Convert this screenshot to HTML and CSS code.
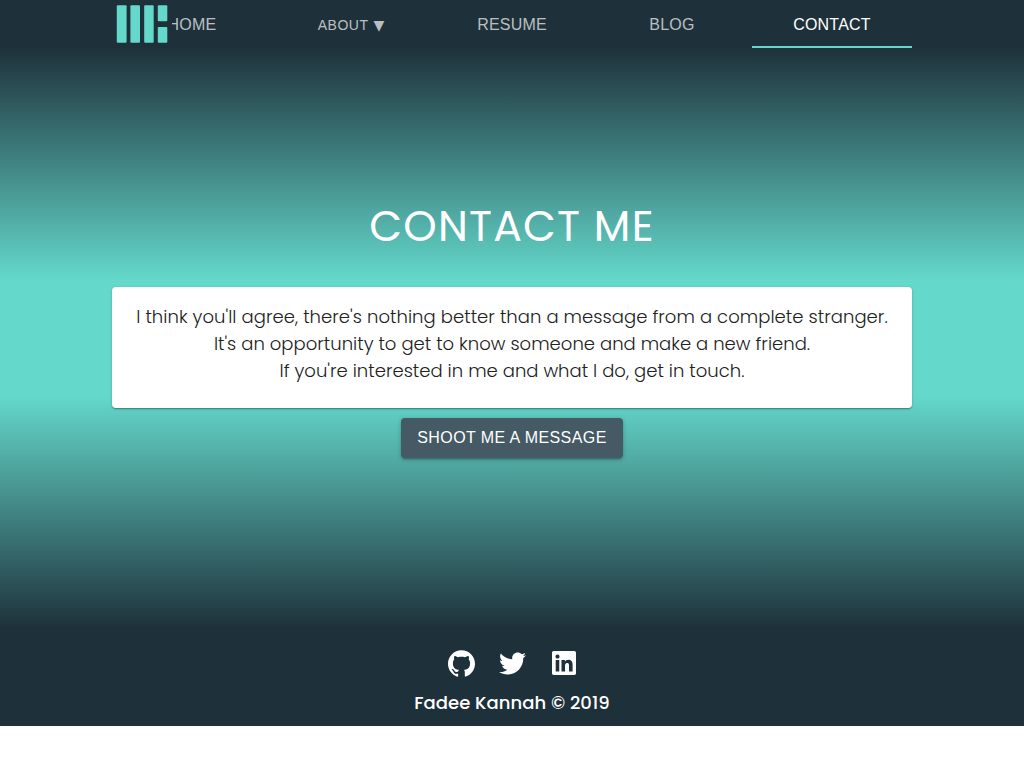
FILE: index.html
```html
<!DOCTYPE html>
<html lang="en">
<head>
<meta charset="utf-8">
<title>Contact | Fadee Kannah</title>
<link rel="stylesheet" href="styles.css">
</head>
<body>
<header class="header">
  <nav class="tabs">
    <a class="logo" aria-label="Logo"><svg width="60" height="48" viewBox="0 0 60 48" fill="#64d8cb"><rect x="4.8" y="5.3" width="9.8" height="37.4" rx="1"/><rect x="18.4" y="5.3" width="9.6" height="37.4" rx="1"/><rect x="32.2" y="5.3" width="9.5" height="37.4" rx="1"/><rect x="45.8" y="5.3" width="9.5" height="16" rx="1"/><rect x="45.8" y="27" width="9.5" height="15.7" rx="1"/></svg></a>
    <a class="tab">HOME</a>
    <a class="tab tab-menu">ABOUT <span class="arrow">▼</span></a>
    <a class="tab">RESUME</a>
    <a class="tab">BLOG</a>
    <a class="tab tab-active">CONTACT</a>
  </nav>
</header>
<main class="main">
  <h1 class="title">CONTACT ME</h1>
  <div class="card">
    <p class="line line-wide">I think you'll agree, there's nothing better than a message from a complete stranger.</p>
    <p class="line">It's an opportunity to get to know someone and make a new friend.</p>
    <p class="line">If you're interested in me and what I do, get in touch.</p>
  </div>
  <button class="button">SHOOT ME A MESSAGE</button>
</main>
<footer class="footer">
  <div class="social">
    <svg class="icon" viewBox="0 0 24 24"><path d="M12 .297c-6.63 0-12 5.373-12 12 0 5.303 3.438 9.8 8.205 11.385.6.113.82-.258.82-.577 0-.285-.01-1.04-.015-2.04-3.338.724-4.042-1.61-4.042-1.61C4.422 18.07 3.633 17.7 3.633 17.7c-1.087-.744.084-.729.084-.729 1.205.084 1.838 1.236 1.838 1.236 1.07 1.835 2.809 1.305 3.495.998.108-.776.417-1.305.76-1.605-2.665-.3-5.466-1.332-5.466-5.93 0-1.31.465-2.38 1.235-3.22-.135-.303-.54-1.523.105-3.176 0 0 1.005-.322 3.3 1.23.96-.267 1.98-.399 3-.405 1.02.006 2.04.138 3 .405 2.28-1.552 3.285-1.23 3.285-1.23.645 1.653.24 2.873.12 3.176.765.84 1.23 1.91 1.23 3.22 0 4.61-2.805 5.625-5.475 5.92.42.36.81 1.096.81 2.22 0 1.606-.015 2.896-.015 3.286 0 .315.21.69.825.57C20.565 22.092 24 17.592 24 12.297c0-6.627-5.373-12-12-12"/></svg>
    <svg class="icon" viewBox="0 0 512 512"><path d="M459.37 151.716c.325 4.548.325 9.097.325 13.645 0 138.72-105.583 298.558-298.558 298.558-59.452 0-114.68-17.219-161.137-47.106 8.447.974 16.568 1.299 25.34 1.299 49.055 0 94.213-16.568 130.274-44.832-46.132-.975-84.792-31.188-98.112-72.772 6.498.974 12.995 1.624 19.818 1.624 9.421 0 18.843-1.3 27.614-3.573-48.081-9.747-84.143-51.98-84.143-102.985v-1.299c13.969 7.797 30.214 12.67 47.431 13.319-28.264-18.843-46.781-51.005-46.781-87.391 0-19.492 5.197-37.36 14.294-52.954 51.655 63.675 129.3 105.258 216.365 109.807-1.624-7.797-2.599-15.918-2.599-24.04 0-57.828 46.782-104.934 104.934-104.934 30.213 0 57.502 12.67 76.67 33.137 23.715-4.548 46.456-13.32 66.599-25.34-7.798 24.366-24.366 44.833-46.132 57.827 21.117-2.273 41.584-8.122 60.426-16.243-14.292 20.791-32.161 39.308-52.628 54.253z"/></svg>
    <svg class="icon icon-in" viewBox="0 0 448 448"><path d="M416 0H31.9C14.3 0 0 14.5 0 32.3v383.4C0 433.5 14.3 448 31.9 448H416c17.6 0 32-14.5 32-32.3V32.3C448 14.5 433.6 0 416 0zM135.4 384H69V170.2h66.5V384zm-33.2-243c-21.3 0-38.5-17.3-38.5-38.5S80.9 64 102.2 64c21.2 0 38.5 17.3 38.5 38.5 0 21.3-17.2 38.5-38.5 38.5zm282.1 243h-66.4V280c0-24.8-.5-56.7-34.5-56.7-34.6 0-39.9 27-39.9 54.9V384h-66.4V170.2h63.7v29.2h.9c8.900-16.800 30.600-34.500 62.900-34.500 67.200 0 79.700 44.300 79.700 101.900V384z"/></svg>
  </div>
  <p class="copyright">Fadee Kannah © 2019</p>
</footer>
</body>
</html>
```
FILE: styles.css
```css
* { box-sizing: border-box; }
body { margin: 0; background: #fff; font-family: Poppins, Inter, sans-serif; }
p, h1 { margin: 0; }
.header { height: 48px; background: #1e313b; display: flex; justify-content: center; }
.tabs { position: relative; width: 800px; display: grid; grid-template-columns: repeat(5, 1fr); }
.logo { position: absolute; left: 0; top: 0; width: 60px; height: 48px; background: #1e313b; }
.logo svg { display: block; }
.tab { height: 48px; padding-top: 2px; display: flex; align-items: center; justify-content: center; font: 16px "Liberation Sans", Arial, sans-serif; letter-spacing: .2px; color: rgba(255,255,255,.7); }
.tab-menu { font-size: 14px; letter-spacing: .5px; gap: 5px; padding-right: 2px; }
.arrow { font-family: "DejaVu Sans", sans-serif; font-size: 14px; letter-spacing: 0; margin-bottom: 1px; }
.tab-active { color: #fff; border-bottom: 2px solid #64d8cb; padding-top: 4px; }
.main { height: 580px; padding-top: 150px; display: flex; flex-direction: column; align-items: center; background: linear-gradient(#1e313b, #64d8cb 40%, #64d8cb 60%, #1e313b); }
.title { font-size: 42.5px; line-height: 56px; font-weight: 400; color: #fff; letter-spacing: 1.2px; white-space: nowrap; }
.card { width: 800px; height: 121px; margin-top: 33px; padding-top: 16px; background: #fff; border-radius: 4px; box-shadow: 0 1px 3px rgba(0,0,0,.2), 0 1px 1px rgba(0,0,0,.14), 0 2px 1px -1px rgba(0,0,0,.12); }
.line { font-size: 18px; line-height: 27px; font-weight: 300; color: #212121; text-align: center; letter-spacing: .02px; white-space: nowrap; }
.line-wide { letter-spacing: .05px; }
.button { width: 222px; height: 40px; margin-top: 10px; padding: 0; border: 0; border-radius: 4px; background: #455a64; color: #fff; font: 16px "Liberation Sans", Arial, sans-serif; letter-spacing: .42px; box-shadow: 0 1px 5px rgba(0,0,0,.2), 0 2px 2px rgba(0,0,0,.14), 0 3px 1px -2px rgba(0,0,0,.12); }
.footer { height: 98px; padding-top: 22px; background: #1e313b; color: #fff; display: flex; flex-direction: column; align-items: center; }
.social { height: 27px; display: flex; align-items: center; gap: 24px; }
.icon { width: 27px; height: 27px; fill: #fff; }
.icon-in { width: 24px; height: 24px; margin: 0 1px 1px 2px; }
.copyright { margin-top: 12px; font-size: 18px; line-height: 27px; font-weight: 500; letter-spacing: .04px; white-space: nowrap; }
```
